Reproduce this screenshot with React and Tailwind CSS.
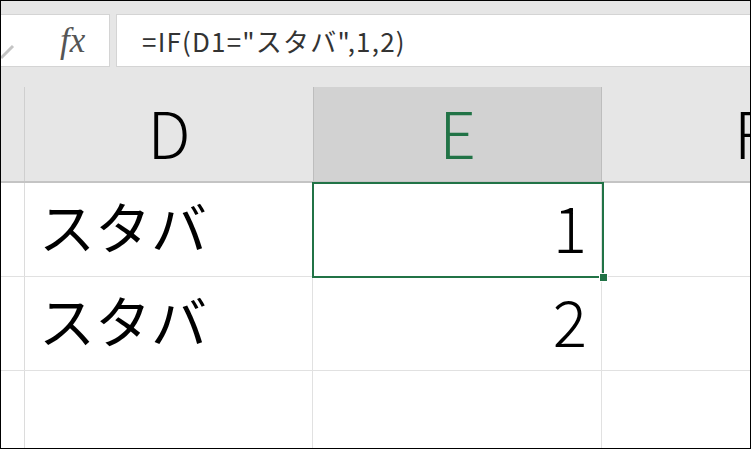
export default function App() {
  const jp = { fontFamily: '"Noto Sans CJK JP", "Noto Sans", sans-serif' };
  return (
    <div className="w-[751px] h-[449px] border border-black bg-[#e6e6e6] overflow-hidden flex flex-col" style={jp}>
      {/* formula bar */}
      <div className="flex shrink-0 h-[53px] mt-[13px] gap-[6px]">
        <div className="w-[109px] shrink-0 bg-white border border-l-0 border-[#d4d4d4] flex items-center relative">
          <svg className="absolute left-0 top-[29px]" width="14" height="16" viewBox="0 0 14 16">
            <path d="M0 14 L12 2" stroke="#c4c4c4" strokeWidth="3" fill="none" />
          </svg>
          <span className="ml-[59px] text-[35px] italic text-[#555] leading-none" style={{ fontFamily: '"Liberation Serif", serif' }}>fx</span>
        </div>
        <div className="flex-1 bg-white border border-r-0 border-[#d4d4d4] flex items-center pl-[25px]">
          <span className="text-[26px] text-[#333] leading-none tracking-[1.2px]">=IF(D1="スタバ",1,2)</span>
        </div>
      </div>

      {/* column headers */}
      <div className="flex shrink-0 h-[97px] mt-[19px] border-b-2 border-[#c4c4c4]">
        <div className="w-[24px] shrink-0 border-r border-[#cfcfcf] mt-[1px]"></div>
        <div className="w-[288px] shrink-0 flex items-center justify-center text-[64px] font-light text-black leading-none pb-[6px]">D</div>
        <div className="w-[289px] shrink-0 bg-[#d2d2d2] border-x border-[#bdbdbd] mt-[1px] flex items-center justify-center text-[64px] font-light text-[#217346] leading-none pb-[6px]">E</div>
        <div className="flex-1 flex items-center text-[64px] font-light text-black leading-none pb-[6px] pl-[132px] overflow-hidden">F</div>
      </div>

      {/* rows */}
      <div className="flex-1 bg-white relative">
        {[["スタバ", "1"], ["スタバ", "2"], ["", ""]].map((r, i) => (
          <div key={i} className="flex shrink-0 h-[94px] border-b border-[#e1e1e1]">
            <div className="w-[24px] shrink-0 border-r border-[#dcdcdc]"></div>
            <div className="w-[288px] shrink-0 border-r border-[#e1e1e1] flex items-center pl-[14px] text-[56px] leading-none text-black pb-[10px]">{r[0]}</div>
            <div className="w-[289px] shrink-0 border-r border-[#e1e1e1] flex items-center justify-end pr-[14px] text-[64px] font-light leading-none text-black pb-[10px]">{r[1]}</div>
            <div className="flex-1"></div>
          </div>
        ))}
        <div className="absolute left-[311px] top-[-1px] w-[292px] h-[96px] border-2 border-[#217346]">
          <div className="absolute right-[-6px] bottom-[-6px] w-[9px] h-[9px] bg-[#217346] border border-white"></div>
        </div>
      </div>
    </div>
  );
}
